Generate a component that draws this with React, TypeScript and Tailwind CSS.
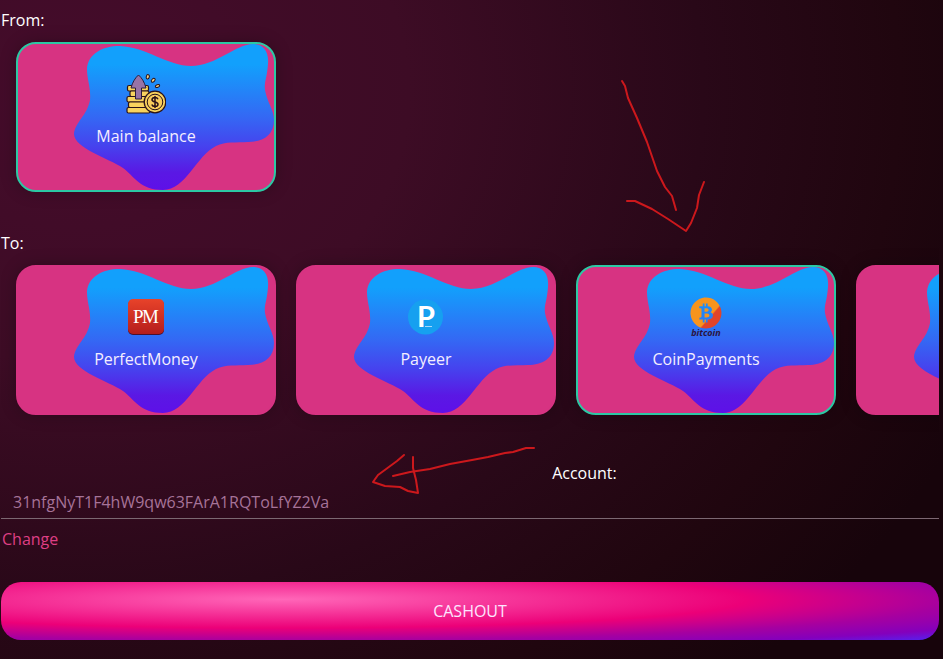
import { useState, type ReactNode } from "react";
import { FaBitcoin } from "react-icons/fa6";
import clsx from "clsx";

function BalanceIcon() {
  return (
    <svg viewBox="0 0 40 40" className="w-10 h-10" aria-hidden="true">
      <g fill="#f8d35e" stroke="#2a1218" strokeWidth="1.2" strokeLinejoin="round">
        <rect x="1.5" y="11.5" width="21" height="5.5" rx="1.5" />
        <rect x="4" y="17" width="19" height="5.5" rx="1.5" />
        <rect x="1" y="22.5" width="21" height="5.5" rx="1.5" />
        <rect x="2.5" y="28" width="20" height="5.5" rx="1.5" />
        <rect x="1" y="33.5" width="23" height="5.5" rx="1.5" />
      </g>
      <path
        d="M12.5 1C15.5 3.5 18.5 8 20 14H15.5V25H9.5V14H5C6.5 8 9.5 3.5 12.5 1Z"
        fill="#9873a6"
        stroke="#2a1c3c"
        strokeWidth="1"
        strokeLinejoin="round"
      />
      <circle cx="29" cy="28" r="10.8" fill="#f8d35e" stroke="#2a1218" strokeWidth="1.3" />
      <circle cx="29" cy="28" r="7.8" fill="#f8cd5c" stroke="#2a1218" strokeWidth="1" />
      <path
        d="M32 25.2C31.5 24 30.4 23.5 29 23.5C27.2 23.5 26 24.4 26 25.8C26 28.8 32 27.2 32 30.2C32 31.6 30.8 32.5 29 32.5C27.4 32.5 26.2 31.8 25.8 30.5M29 22V34"
        fill="none"
        stroke="#2a1218"
        strokeWidth="1.5"
      />
      <g fill="#f3cf86" stroke="#2a1218" strokeWidth="1">
        <ellipse cx="21.8" cy="2.8" rx="1.5" ry="2.2" transform="rotate(15 21.8 2.8)" />
        <ellipse cx="27.2" cy="6.3" rx="1.5" ry="2.3" transform="rotate(45 27.2 6.3)" />
        <ellipse cx="31.5" cy="12" rx="1.4" ry="2.3" transform="rotate(70 31.5 12)" />
      </g>
    </svg>
  );
}

function PerfectMoneyIcon() {
  return (
    <svg viewBox="0 0 40 40" className="w-10 h-10" aria-hidden="true">
      <defs>
        <linearGradient id="pm" x1="0" y1="0" x2="0" y2="1">
          <stop offset="0" stopColor="#e8432a" />
          <stop offset="1" stopColor="#b51d1c" />
        </linearGradient>
      </defs>
      <rect x="2" y="3" width="36" height="35" rx="5" fill="#4a1030" />
      <rect x="2" y="2" width="36" height="35" rx="5" fill="url(#pm)" />
      <g fontSize="19" fill="#fff" fontFamily="Liberation Serif, serif">
        <text x="7" y="26">
          P
        </text>
        <text x="16" y="26">
          M
        </text>
      </g>
    </svg>
  );
}

function PayeerIcon() {
  return (
    <svg viewBox="0 0 40 40" className="w-10 h-10" aria-hidden="true">
      <circle cx="19.5" cy="20" r="17.5" fill="#16a0f0" />
      <text x="20" y="30" textAnchor="middle" fontSize="29" fontWeight="700" fill="#fff" fontFamily="Lato, sans-serif">
        P
      </text>
      <path d="M19 29.5H26" stroke="#a8d8fa" strokeWidth="1" />
    </svg>
  );
}

function CoinPaymentsIcon() {
  return (
    <svg viewBox="0 0 40 40" className="w-10 h-10 overflow-visible" aria-hidden="true">
      <defs>
        <linearGradient id="btc" x1="0" y1="0" x2="0.7" y2="1">
          <stop offset="0.7" stopColor="#f7941d" />
          <stop offset="0.74" stopColor="#e0442a" />
        </linearGradient>
      </defs>
      <g transform="rotate(-14 20 16)">
        <FaBitcoin x="4" y="0" size={32} fill="url(#btc)" />
      </g>
      <text
        x="20"
        y="39"
        textAnchor="middle"
        fontSize="9"
        fontWeight="700"
        fontStyle="italic"
        fill="#2b1440"
        fontFamily="Open Sans, sans-serif"
      >
        bitcoin
      </text>
    </svg>
  );
}

function Blob() {
  return (
    <svg viewBox="2 2 256 146" className="absolute inset-0 w-full h-full" aria-hidden="true">
      <defs>
        <linearGradient id="blob" x1="0" y1="0" x2="0" y2="1">
          <stop offset="0.14" stopColor="#12a0fc" />
          <stop offset="0.5" stopColor="#3468f4" />
          <stop offset="0.7" stopColor="#4642ee" />
          <stop offset="0.88" stopColor="#5a18e4" />
          <stop offset="1" stopColor="#5e10e8" />
        </linearGradient>
      </defs>
      <path
        d="M104 4C130 5 152 24 175 24C200 24 220 2 237 2C248 2 253 10 252 22C251 36 248 40 249 48C251 60 258 68 258 78C258 94 246 100 232 100C220 101 210 99 200 104C180 114 170 148 147 148C124 148 118 134 107 126C92 116 58 106 58 92C59 80 71 74 74 58C75 45 71 38 71 27C72 12 86 4 104 4Z"
        fill="url(#blob)"
      />
    </svg>
  );
}

interface WalletCardProps {
  name?: string;
  icon?: ReactNode;
  selected?: boolean;
  onClick?: () => void;
}

function WalletCard({ name, icon, selected = false, onClick }: WalletCardProps) {
  return (
    <button
      type="button"
      aria-pressed={selected}
      aria-label={name ?? "More"}
      onClick={onClick}
      className={clsx(
        "relative shrink-0 w-[260px] h-[150px] rounded-[20px] overflow-hidden border-2 bg-[#d73382] shadow-[0_0_16px_rgba(0,0,0,0.25)]",
        selected ? "border-[#2cc8a4]" : "border-[#d73382]"
      )}
    >
      <Blob />
      <span className="relative flex flex-col items-center gap-[10px] h-full pt-[30px] text-[#f4eeff]">
        {icon}
        <span>{name}</span>
      </span>
    </button>
  );
}

// hand-drawn pointers over the form
function Arrows() {
  return (
    <svg
      width="943"
      height="659"
      className="absolute top-0 left-0 pointer-events-none"
      fill="none"
      stroke="#cc181c"
      strokeWidth="2"
      strokeLinecap="round"
      strokeLinejoin="round"
      aria-hidden="true"
    >
      <path d="M622 81L625 86L628 98L637 118L647 142L657 171L665 187L672 196L676 210" />
      <path d="M627 201L635 201L652 209L668 219L686 231L691 223L697 208L699 195L704 182" />
      <path d="M534 448L526 448L513 452L505 453L488 457L472 460L450 464L430 469L410 472L393 476" />
      <path d="M404 455L397 461L378 475L373 482L385 486L400 487L408 491L418 493L416 480L413 468L413 457" />
    </svg>
  );
}

const targets = [
  { name: "PerfectMoney", icon: <PerfectMoneyIcon /> },
  { name: "Payeer", icon: <PayeerIcon /> },
  { name: "CoinPayments", icon: <CoinPaymentsIcon /> },
];

export default function App() {
  const [target, setTarget] = useState("CoinPayments");
  const [account, setAccount] = useState("31nfgNyT1F4hW9qw63FArA1RQToLfYZ2Va");

  return (
    <main className="relative min-h-screen overflow-hidden pt-2 pb-5 pl-px pr-1 font-['Open_Sans',sans-serif] text-base text-white bg-[radial-gradient(ellipse_104%_120%_at_8%_14%,#450c2b_0%,#3d0c25_34%,#290818_64%,#20060f_84%,#17040b_100%)]">
      <section>
        <h2>From:</h2>
        <div className="flex mt-[10px] pl-[15px]">
          <WalletCard name="Main balance" icon={<BalanceIcon />} selected />
        </div>
      </section>

      <section className="mt-[39px]">
        <h2>To:</h2>
        {/* room around the row keeps the card shadows from being cut */}
        <div className="flex gap-5 -mt-[10px] -mb-5 py-5 pl-[15px] overflow-hidden">
          {targets.map((t) => (
            <WalletCard
              key={t.name}
              name={t.name}
              icon={t.icon}
              selected={target === t.name}
              onClick={() => setTarget(t.name)}
            />
          ))}
          <WalletCard />
        </div>
      </section>

      <form className="mt-[46px]" onSubmit={(e) => e.preventDefault()}>
        <div className="grid grid-cols-12">
          <label htmlFor="account" className="col-start-8 col-span-5 pl-1">
            Account:
          </label>
        </div>
        <input
          id="account"
          type="text"
          value={account}
          onChange={(e) => setAccount(e.target.value)}
          className="block w-full h-[34px] px-3 bg-transparent border-b border-[#7c6872] text-[#a67398] outline-none"
        />
        <button type="button" className="block mt-2 pl-px text-[#de3f84]">
          Change
        </button>
        <button
          type="submit"
          className="block w-full h-[58px] mt-[31px] rounded-[20px] text-[#fde6ff] bg-[radial-gradient(ellipse_farthest-corner_at_30%_30%,#ff66b8_0%,#ec0078_50%,#a600a0_72%,#8400bc_88%,#5522f0_100%)]"
        >
          CASHOUT
        </button>
      </form>

      <Arrows />
    </main>
  );
}
